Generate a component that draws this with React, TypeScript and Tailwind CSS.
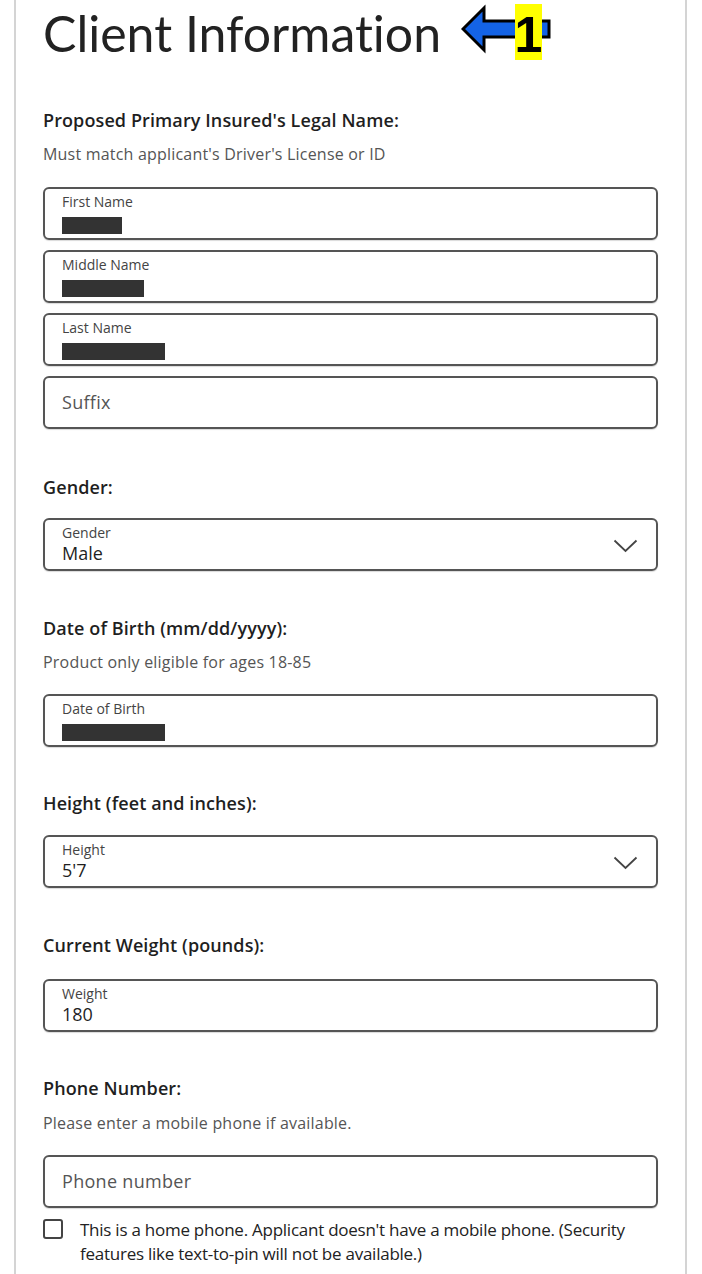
const font = { fontFamily: "'Open Sans', Lato, sans-serif" };

function Heading({ children, className = "" }: { children: React.ReactNode; className?: string }) {
  return <div className={`text-[18px] leading-[24px] font-semibold text-[#1f1f1f] tracking-[0.1px] ${className}`}>{children}</div>;
}

function Hint({ children, className = "" }: { children: React.ReactNode; className?: string }) {
  return <div className={`text-[16px] leading-[22px] text-[#555] tracking-[0.2px] ${className}`}>{children}</div>;
}

function Chevron() {
  return (
    <svg width="25" height="14" viewBox="0 0 25 14" className="mt-[19px]">
      <polyline points="1.5,1.5 12.5,12 23.5,1.5" fill="none" stroke="#444" strokeWidth="1.8" />
    </svg>
  );
}

// filled field: small label on top, value (or redacted bar) under it
function Field({ label, value, bar, select }: { label: string; value?: string; bar?: number; select?: boolean }) {
  return (
    <div className="h-[53px] border-2 border-[#555] rounded-[6px] flex items-start justify-between pl-[17px] pr-[18px] shadow-[0_1px_1px_rgba(0,0,0,0.15)]">
      <div className="pt-[5px]">
        <div className="text-[14px] leading-[16px] text-[#444]">{label}</div>
        {bar ? (
          <div className="h-[17px] bg-[#333] mt-[7px]" style={{ width: bar }} />
        ) : (
          <div className="text-[18px] leading-[24px] font-medium text-[#1f1f1f]">{value}</div>
        )}
      </div>
      {select && <Chevron />}
    </div>
  );
}

function Placeholder({ text }: { text: string }) {
  return (
    <div className="h-[53px] border-2 border-[#555] rounded-[6px] flex items-center pl-[17px] shadow-[0_1px_1px_rgba(0,0,0,0.15)]">
      <span className="text-[18px] text-[#555] tracking-[0.3px]">{text}</span>
    </div>
  );
}

function Callout() {
  return (
    <svg width="92" height="60" viewBox="0 0 92 60" className="ml-[20px] mt-[-2px]">
      <path d="M2 27 L23 6 L23 19 L88 19 L88 35 L23 35 L23 48 Z" fill="#1463e6" stroke="#000" strokeWidth="3" strokeLinejoin="miter" />
      <rect x="54" y="2" width="27" height="56" fill="#ffff00" />
      <text x="67.5" y="50" textAnchor="middle" fontFamily="'Liberation Sans', Arial, sans-serif" fontWeight="bold" fontSize="50" fill="#000">1</text>
    </svg>
  );
}

export default function App() {
  return (
    <div className="bg-white min-h-[1274px] w-[702px] overflow-hidden" style={font}>
      <div className="ml-[14px] w-[673px] border-x-2 border-[#d4d4d4] px-[27px] pb-[30px] min-h-[1274px]">
        <div className="h-[66px] flex items-center">
          <h1 className="text-[50px] leading-none text-[#222] [font-variant-ligatures:none]" style={{ fontFamily: "Lato, sans-serif" }}>
            Client Information
          </h1>
          <Callout />
        </div>

        <Heading className="mt-[42px]">Proposed Primary Insured's Legal Name:</Heading>
        <Hint className="mt-[11px]">Must match applicant's Driver's License or ID</Hint>
        <div className="mt-[22px] flex flex-col gap-[10px]">
          <Field label="First Name" bar={60} />
          <Field label="Middle Name" bar={82} />
          <Field label="Last Name" bar={103} />
          <Placeholder text="Suffix" />
        </div>

        <Heading className="mt-[46px]">Gender:</Heading>
        <div className="mt-[19px]">
          <Field label="Gender" value="Male" select />
        </div>

        <Heading className="mt-[45px]">Date of Birth (mm/dd/yyyy):</Heading>
        <Hint className="mt-[11px]">Product only eligible for ages 18-85</Hint>
        <div className="mt-[21px]">
          <Field label="Date of Birth" bar={103} />
        </div>

        <Heading className="mt-[44px]">Height (feet and inches):</Heading>
        <div className="mt-[20px]">
          <Field label="Height" value="5'7" select />
        </div>

        <Heading className="mt-[45px]">Current Weight (pounds):</Heading>
        <div className="mt-[22px]">
          <Field label="Weight" value="180" />
        </div>

        <Heading className="mt-[44px]">Phone Number:</Heading>
        <Hint className="mt-[12px]">Please enter a mobile phone if available.</Hint>
        <div className="mt-[21px]">
          <Placeholder text="Phone number" />
        </div>

        <label className="mt-[10px] flex items-start gap-[17px]">
          <span className="mt-[1px] w-[20px] h-[20px] border-2 border-[#444] rounded-[3px] shrink-0" />
          <span className="text-[17px] leading-[24px] text-[#222] tracking-[-0.25px]">
            This is a home phone. Applicant doesn't have a mobile phone. (Security features like text-to-pin will not be available.)
          </span>
        </label>
      </div>
    </div>
  );
}
